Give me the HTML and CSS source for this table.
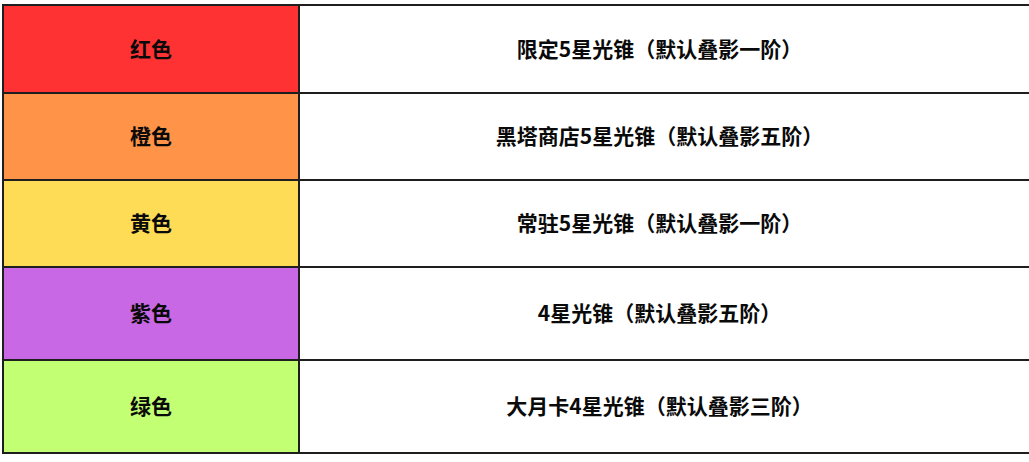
FILE: index.html
```html
<!DOCTYPE html>
<html lang="zh">
<head>
<meta charset="utf-8">
<link rel="stylesheet" href="styles.css">
</head>
<body>
<div class="wrap">
<table class="tier">
  <tr class="r1"><td class="c red">红色</td><td class="d">限定5星光锥（默认叠影一阶）</td></tr>
  <tr class="r2"><td class="c orange">橙色</td><td class="d">黑塔商店5星光锥（默认叠影五阶）</td></tr>
  <tr class="r3"><td class="c yellow">黄色</td><td class="d">常驻5星光锥（默认叠影一阶）</td></tr>
  <tr class="r4"><td class="c purple">紫色</td><td class="d">4星光锥（默认叠影五阶）</td></tr>
  <tr class="r5"><td class="c green">绿色</td><td class="d">大月卡4星光锥（默认叠影三阶）</td></tr>
</table>
</div>
</body>
</html>
```

FILE: styles.css
```css
html, body {
  margin: 0;
  padding: 0;
  background: #fff;
}
.wrap {
  padding: 4px 0 0 2px;
}
.tier {
  border-collapse: collapse;
  width: 1027px;
  font-family: "Noto Sans CJK SC", "Noto Sans", sans-serif;
  font-weight: 700;
  font-size: 21px;
  color: #0a0a0a;
}
.tier td {
  border: 2px solid #1e1e1e;
  text-align: center;
  vertical-align: middle;
  padding: 0 0 3px 0;
}
.tier td.d {
  border-right: none;
  background: #fff;
  padding-right: 10px;
}
.c { width: 294px; }
.r1 td { height: 83px; }
.r2 td { height: 82px; }
.r3 td { height: 82px; }
.r4 td { height: 88px; }
.r5 td { height: 88px; }
.red { background: #fe3232; }
.orange { background: #ff9448; }
.yellow { background: #ffdc56; }
.purple { background: #c868e4; }
.green { background: #c2ff72; }
```
